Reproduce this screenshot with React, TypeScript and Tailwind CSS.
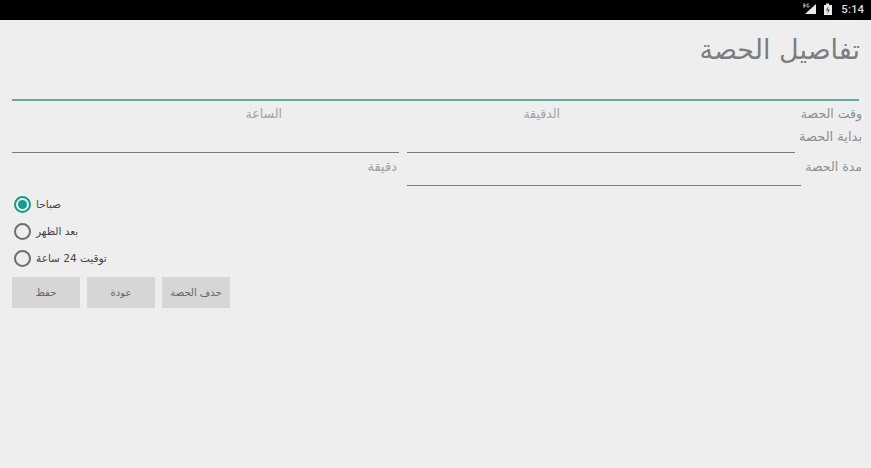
const FONT = "font-['DejaVu_Sans','Noto_Sans',sans-serif]"

function Radio({ label, checked }: { label: string; checked?: boolean }) {
  return (
    <div className="flex h-[27px] items-center gap-[5px] pl-[14px]">
      <span
        className={
          checked
            ? "flex h-[17px] w-[17px] items-center justify-center rounded-full border-2 border-[#169c8c]"
            : "h-[17px] w-[17px] rounded-full border-2 border-[#6f6f6f]"
        }
      >
        {checked && <span className="h-[9px] w-[9px] rounded-full bg-[#169c8c]" />}
      </span>
      <span dir="rtl" className="text-[10.5px] leading-none text-[#444]">
        {label}
      </span>
    </div>
  )
}

function ActionButton({ label }: { label: string }) {
  return (
    <button
      type="button"
      dir="rtl"
      className="h-[31px] w-[68px] bg-[#d6d6d6] text-[10px] text-[#666]"
    >
      {label}
    </button>
  )
}

function StatusIcons() {
  return (
    <svg width="32" height="14" viewBox="0 0 32 14" className="text-[#e8e8e8]">
      <path d="M14 1 V11 H3 Z" fill="currentColor" />
      <rect x="0" y="0" width="8" height="5" fill="#000" />
      <path d="M1 1 H3 V4 H1 M1 2.5 H3 M7 1 H5 V4 H7 V2.5" fill="none" stroke="currentColor" strokeWidth="0.7" />
      <path
        d="M22 2 H24 V0.5 H27 V2 H30 V12 H22 Z"
        fill="currentColor"
      />
      <path d="M26.5 3 L24 7.5 H26 L25.2 11 L28 6.5 H26 Z" fill="#555" />
    </svg>
  )
}

export default function App() {
  return (
    <div className={`${FONT} flex h-[468px] w-[871px] flex-col overflow-hidden bg-[#eeeeee]`}>
      <div className="flex h-[20px] items-center justify-end gap-[7px] bg-black pr-[7px]">
        <StatusIcons />
        <span className="font-['Roboto',sans-serif] text-[11.5px] font-medium text-[#dcdcdc]">5:14</span>
      </div>

      <div className="flex h-[79px] justify-end pr-[11px]">
        <h1 dir="rtl" className="mt-[12px] whitespace-nowrap text-[27px] font-normal leading-[36px] text-[#7d7d7d]">
          تفاصيل الحصة
        </h1>
      </div>

      <div className="mx-[12px] h-[2px] bg-[#68a79e]" />

      <div className="flex h-[26px] items-center whitespace-nowrap text-[12.5px] text-[#a2a2a2]">
        <span dir="rtl" className="w-[282px] text-right">الساعة</span>
        <span dir="rtl" className="w-[278px] text-right">الدقيقة</span>
        <span dir="rtl" className="w-[302px] text-right text-[#8f8f8f]">وقت الحصة</span>
      </div>

      <div className="flex h-[25px] pl-[12px] pr-[9px]">
        <div className="mt-[25px] h-px w-[387px] bg-[#7a7a7a]" />
        <div className="ml-[8px] mt-[25px] h-px w-[388px] bg-[#7a7a7a]" />
        <span dir="rtl" className="ml-auto mt-[2px] whitespace-nowrap text-[13px] leading-[16px] text-[#8f8f8f]">
          بداية الحصة
        </span>
      </div>

      <div className="flex h-[34px] pl-[12px] pr-[9px]">
        <div className="flex w-[385px] justify-end">
          <span dir="rtl" className="mt-[7px] text-[13px] leading-[16px] text-[#a2a2a2]">
            دقيقة
          </span>
        </div>
        <div className="ml-[10px] mt-[33px] h-px w-[394px] bg-[#7a7a7a]" />
        <span dir="rtl" className="ml-auto mt-[7px] whitespace-nowrap text-[12.5px] leading-[16px] text-[#8f8f8f]">
          مدة الحصة
        </span>
      </div>

      <div className="mt-[5px] flex flex-col">
        <Radio label="صباحا" checked />
        <Radio label="بعد الظهر" />
        <Radio label="توقيت 24 ساعة" />
      </div>

      <div className="ml-[12px] mt-[5px] flex gap-[7px]">
        <ActionButton label="حفظ" />
        <ActionButton label="عودة" />
        <ActionButton label="حذف الحصة" />
      </div>
    </div>
  )
}
